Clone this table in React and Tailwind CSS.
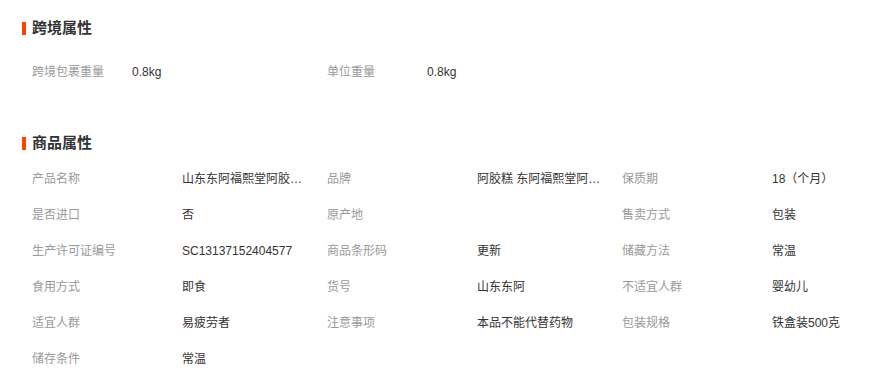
const crossBorder = [
  { label: "跨境包裹重量", value: "0.8kg" },
  { label: "单位重量", value: "0.8kg" },
]

const productAttrs = [
  { label: "产品名称", value: "山东东阿福熙堂阿胶糕即食阿胶固元膏" },
  { label: "品牌", value: "阿胶糕 东阿福熙堂阿胶糕" },
  { label: "保质期", value: "18（个月）" },
  { label: "是否进口", value: "否" },
  { label: "原产地", value: "" },
  { label: "售卖方式", value: "包装" },
  { label: "生产许可证编号", value: "SC13137152404577" },
  { label: "商品条形码", value: "更新" },
  { label: "储藏方法", value: "常温" },
  { label: "食用方式", value: "即食" },
  { label: "货号", value: "山东东阿" },
  { label: "不适宜人群", value: "婴幼儿" },
  { label: "适宜人群", value: "易疲劳者" },
  { label: "注意事项", value: "本品不能代替药物" },
  { label: "包装规格", value: "铁盒装500克" },
  { label: "储存条件", value: "常温" },
]

function Titulo({ children }) {
  return (
    <div className="flex items-center h-5">
      <span className="w-1 h-[13px] bg-[#ff4400]" />
      <h2 className="ml-[6px] text-[15px] font-bold text-[#333]">{children}</h2>
    </div>
  )
}

function App() {
  return (
    <div
      className="w-[891px] h-[377px] bg-white overflow-hidden pl-[22px] pt-[18px]"
      style={{ fontFamily: '"Liberation Sans", "Noto Sans CJK SC", sans-serif' }}
    >
      {/* 跨境属性 */}
      <Titulo>跨境属性</Titulo>
      <div className="flex mt-[16px] pl-[10px]">
        {crossBorder.map((item) => (
          <div key={item.label} className="flex items-center w-[295px] h-9 text-xs">
            <span className="w-[100px] text-[#999]">{item.label}</span>
            <span className="text-[#333]">{item.value}</span>
          </div>
        ))}
      </div>

      {/* 商品属性 */}
      <div className="mt-[43px]">
        <Titulo>商品属性</Titulo>
      </div>
      <div className="grid grid-cols-[295px_295px_295px] mt-[8px] pl-[10px]">
        {productAttrs.map((item) => (
          <div key={item.label} className="flex items-center h-9 text-xs">
            <span className="w-[150px] shrink-0 text-[#999]">{item.label}</span>
            <span className="w-[126px] truncate text-[#333]">{item.value}</span>
          </div>
        ))}
      </div>
    </div>
  )
}

export default App
